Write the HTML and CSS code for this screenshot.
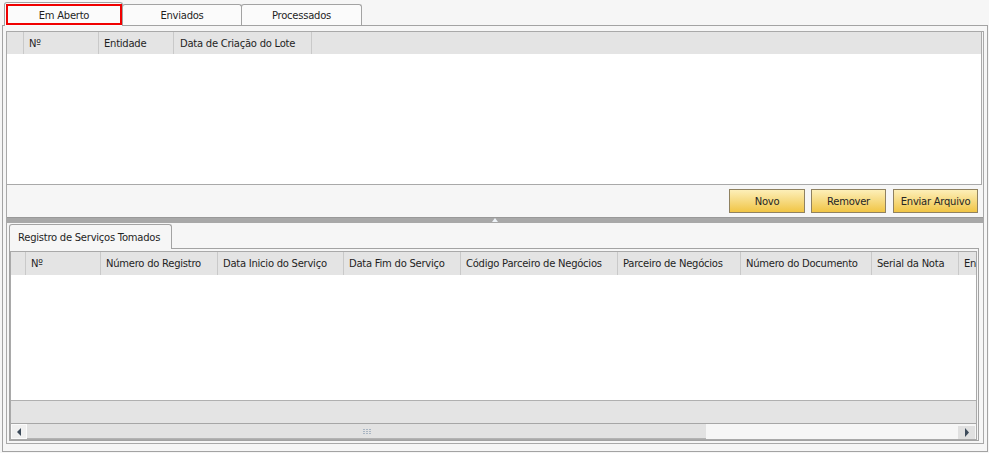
FILE: index.html
```html
<!DOCTYPE html>
<html lang="pt">
<head>
  <meta charset="UTF-8" />
  <title>Registro de Serviços Tomados</title>
  <link rel="stylesheet" href="styles.css">
</head>
<body>
  <div class="tabs">
    <div class="tab active"><span class="focus">Em Aberto</span></div>
    <div class="tab tab-env">Enviados</div>
    <div class="tab tab-proc">Processados</div>
  </div>

  <div class="panel">
    <div class="frame">
      <div class="grid grid-top">
        <div class="grid-head">
          <div class="col c-sel"></div>
          <div class="col c-num">Nº</div>
          <div class="col c-ent">Entidade</div>
          <div class="col c-data">Data de Criação do Lote</div>
          <div class="col c-fill"></div>
        </div>
        <div class="grid-body"></div>
      </div>

      <div class="actions">
        <button class="btn btn-novo">Novo</button>
        <button class="btn btn-rem">Remover</button>
        <button class="btn btn-env">Enviar Arquivo</button>
      </div>

      <div class="splitter">
        <svg class="splitter-arrow" width="6" height="4" viewBox="0 0 6 4"><path d="M3 0 L6 4 L0 4 Z" fill="#eef3f8"/></svg>
      </div>

      <div class="subtabs">
        <div class="subtab">Registro de Serviços Tomados</div>
      </div>

      <div class="subpanel">
        <div class="grid grid-bottom">
          <div class="grid-head">
            <div class="col s-sel"></div>
            <div class="col s-num">Nº</div>
            <div class="col s-reg">Número do Registro</div>
            <div class="col s-ini">Data Inicio do Serviço</div>
            <div class="col s-fim">Data Fim do Serviço</div>
            <div class="col s-cod">Código Parceiro de Negócios</div>
            <div class="col s-par">Parceiro de Negócios</div>
            <div class="col s-doc">Número do Documento</div>
            <div class="col s-ser">Serial da Nota</div>
            <div class="col s-ent">Entidade</div>
          </div>
          <div class="grid-body"></div>
          <div class="grid-foot"></div>
          <div class="hscroll">
            <div class="sb-btn sb-left">
              <svg width="4" height="8" viewBox="0 0 4 8"><path d="M4 0 L4 8 L0 4 Z" fill="#3d4b5a"/></svg>
            </div>
            <div class="sb-thumb">
              <svg class="grip" width="8" height="5" viewBox="0 0 8 5">
                <rect x="0" y="0" width="2" height="1" fill="#a9b5c2"/>
                <rect x="3" y="0" width="2" height="1" fill="#a9b5c2"/>
                <rect x="6" y="0" width="2" height="1" fill="#a9b5c2"/>
                <rect x="0" y="2" width="2" height="1" fill="#a9b5c2"/>
                <rect x="3" y="2" width="2" height="1" fill="#a9b5c2"/>
                <rect x="6" y="2" width="2" height="1" fill="#a9b5c2"/>
                <rect x="0" y="4" width="2" height="1" fill="#a9b5c2"/>
                <rect x="3" y="4" width="2" height="1" fill="#a9b5c2"/>
                <rect x="6" y="4" width="2" height="1" fill="#a9b5c2"/>
              </svg>
            </div>
            <div class="sb-track"></div>
            <div class="sb-btn sb-right">
              <svg width="4" height="9" viewBox="0 0 4 9"><path d="M0 0 L4 4.5 L0 9 Z" fill="#3d4b5a"/></svg>
            </div>
          </div>
        </div>
      </div>
    </div>
  </div>
</body>
</html>
```

FILE: styles.css
```css
    * {
      margin: 0;
      padding: 0;
      box-sizing: border-box;
    }

:root {
      --bg: #f6f6f6;
      --line: #a3a3a3;
      --grid-line: #a9a9a9;
      --head-bg: #e4e4e4;
      --sep: #c9c9c9;
      --text: #1f1f1f;
    }

    body {
      font-family: "DejaVu Sans", Verdana, sans-serif;
      font-size: 10px;
      letter-spacing: -0.25px;
      color: var(--text);
      background-color: var(--bg);
      width: 989px;
      height: 453px;
      overflow: hidden;
    }

    /* top tabs */
    .tabs {
      display: flex;
      align-items: flex-end;
      height: 25px;
      padding-left: 4px;
    }

    .tab {
      height: 21px;
      border: 1px solid var(--line);
      border-bottom: none;
      border-radius: 3px 3px 0 0;
      background: #fbfbfb;
      display: flex;
      align-items: center;
      justify-content: center;
      margin-left: -1px;
    }

    .tab.active {
      width: 119px;
      height: 24px;
      margin-left: 0;
      margin-bottom: -1px;
      position: relative;
      z-index: 1;
      align-items: stretch;
      justify-content: flex-start;
      padding: 1px 0 1px 1px;
    }

    .tab .focus {
      width: 116px;
      border: 2px solid #f00000;
      display: flex;
      align-items: center;
      justify-content: center;
      padding-top: 1px;
    }

    .tab-env {
      width: 120px;
    }

    .tab-proc {
      width: 121px;
    }

    /* main panel */
    .panel {
      margin-left: 2px;
      width: 986px;
      height: 427px;
      border: 1px solid var(--line);
      padding: 5px 3px 0 3px;
    }

    .frame {
      border: 1px solid var(--grid-line);
      padding-bottom: 2px;
      display: flex;
      flex-direction: column;
    }

    .grid {
      display: flex;
      flex-direction: column;
      background: #fff;
      overflow: hidden;
    }

    .grid-top {
      height: 153px;
      margin-right: 1px;
      border-right: 1px solid var(--grid-line);
      border-bottom: 1px solid var(--grid-line);
    }

    .grid-head {
      display: flex;
      flex-shrink: 0;
      height: 22px;
      background: var(--head-bg);
      white-space: nowrap;
    }

    .col {
      flex-shrink: 0;
      display: flex;
      align-items: center;
      padding-left: 5px;
      border-right: 1px solid var(--sep);
      overflow: hidden;
    }

    .c-sel { width: 17px; }
    .c-num { width: 75px; }
    .c-ent { width: 75px; }
    .c-data { width: 138px; padding-left: 6px; }
    .c-fill { flex: 1; border-right: none; }

    .grid-body {
      flex: 1;
      background: #fff;
    }

    /* buttons */
    .actions {
      display: flex;
      justify-content: flex-end;
      gap: 6px;
      margin-top: 4px;
      padding-right: 5px;
      height: 24px;
    }

    .btn {
      font-family: inherit;
      font-size: 10px;
      letter-spacing: -0.25px;
      color: #262626;
      height: 24px;
      border: 1px solid #8f8160;
      background: linear-gradient(to bottom, #fdefb8, #f7dc86 45%, #f1c545);
      cursor: pointer;
    }

    .btn-novo { width: 76px; }
    .btn-rem { width: 75px; }
    .btn-env { width: 85px; margin-left: 1px; }

    /* splitter */
    .splitter {
      margin-top: 4px;
      height: 6px;
      background: #a8a8a8;
      border-top: 1px solid #999;
      display: flex;
      justify-content: center;
    }

    .splitter-arrow {
      display: block;
      margin-left: -1px;
    }

    /* lower tab */
    .subtabs {
      display: flex;
      margin-top: 1px;
      padding-left: 2px;
    }

    .subtab {
      width: 163px;
      height: 25px;
      margin-bottom: -1px;
      border: 1px solid var(--line);
      border-bottom: none;
      border-radius: 3px 3px 0 0;
      background: var(--bg);
      position: relative;
      z-index: 1;
      display: flex;
      align-items: center;
      padding-left: 8px;
      white-space: nowrap;
    }

    .subpanel {
      margin: 0 4px 0 2px;
      height: 193px;
      border: 1px solid var(--line);
      padding: 2px 1px 0 0;
    }

    .grid-bottom {
      height: 189px;
      border: 1px solid var(--grid-line);
    }

    .grid-bottom .grid-head {
      height: 23px;
    }

    .s-sel { width: 15px; }
    .s-num { width: 75px; }
    .s-reg { width: 117px; }
    .s-ini { width: 126px; }
    .s-fim { width: 117px; }
    .s-cod { width: 157px; }
    .s-par { width: 123px; }
    .s-doc { width: 131px; }
    .s-ser { width: 87px; }
    .s-ent { width: 90px; border-right: none; }

    .grid-foot {
      flex-shrink: 0;
      height: 24px;
      background: var(--head-bg);
      border-top: 1px solid #b0b0b0;
      border-bottom: 1px solid #a6a6a6;
    }

    /* horizontal scrollbar */
    .hscroll {
      flex-shrink: 0;
      display: flex;
      height: 15px;
      background: var(--bg);
    }

    .sb-btn {
      display: flex;
      align-items: center;
      justify-content: center;
    }

    .sb-left {
      width: 16px;
      background: #f0f0f0;
      border: 1px solid #fbfbfb;
    }

    .sb-right {
      width: 17px;
      background: #e0e0e0;
      margin-right: 1px;
      margin-top: 2px;
    }

    .sb-thumb {
      width: 679px;
      background: #e2e2e2;
      border-bottom: 1px solid #b3b3b3;
      display: flex;
      align-items: center;
      justify-content: center;
    }

    .grip {
      display: block;
    }

    .sb-track {
      flex: 1;
    }
```
